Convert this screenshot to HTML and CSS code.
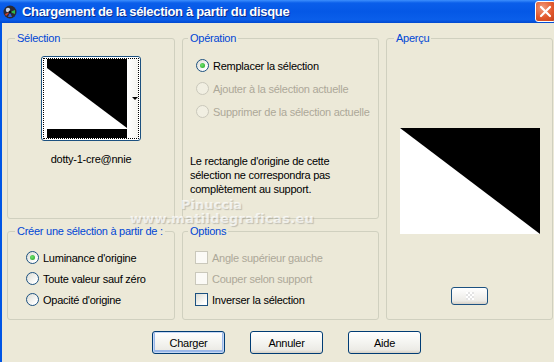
FILE: index.html
```html
<!DOCTYPE html>
<html lang="fr">
<head>
	<meta charset="UTF-8">
	<title>Chargement de la sélection à partir du disque</title>
	<link rel="stylesheet" href="styles.css">
</head>
<body>
	<div class="window">
		<div class="titlebar">
			<svg class="app-icon" width="14" height="14" viewBox="0 0 14 14">
				<circle cx="7" cy="7" r="6.5" fill="#2b2b33"/>
				<circle cx="5" cy="5" r="2.2" fill="#c9d3e6"/>
				<path d="M7 7 L12 5 L12 9 Z" fill="#2fb84a"/>
				<path d="M7 7 L9 12 L5 12 Z" fill="#2a5fe0"/>
				<path d="M7 7 L2 9 L3 11 Z" fill="#d8402a"/>
				<circle cx="7" cy="7" r="1.5" fill="#111"/>
			</svg>
			<span class="title">Chargement de la sélection à partir du disque</span>
			<div class="close">
				<svg width="21" height="21" viewBox="0 0 21 21">
					<path d="M6 6 L15 15 M15 6 L6 15" stroke="#fff" stroke-width="2.2" stroke-linecap="round"/>
				</svg>
			</div>
		</div>

		<div class="body">
			<div class="groups">
				<fieldset class="group g-selection">
					<legend>Sélection</legend>
					<div class="thumb">
						<div class="thumb-focus">
							<svg class="thumb-img" width="80" height="79" viewBox="0 0 80 79">
								<rect width="80" height="79" fill="#000"/>
								<polygon points="0,9 80,69 80,70 0,70" fill="#fff"/>
							</svg>
							<div class="thumb-drop"><span class="arrow"></span></div>
						</div>
					</div>
					<div class="thumb-name">dotty-1-cre@nnie</div>
				</fieldset>

				<fieldset class="group g-operation">
					<legend>Opération</legend>
					<div class="choices">
						<div class="choice"><span class="radio checked"></span>Remplacer la sélection</div>
						<div class="choice disabled"><span class="radio"></span>Ajouter à la sélection actuelle</div>
						<div class="choice disabled"><span class="radio"></span>Supprimer de la sélection actuelle</div>
					</div>
					<p class="note">Le rectangle d'origine de cette<br>sélection ne correspondra pas<br>complètement au support.</p>
				</fieldset>

				<fieldset class="group g-preview">
					<legend>Aperçu</legend>
					<svg class="preview" width="140" height="106" viewBox="0 0 140 106">
						<rect width="140" height="106" fill="#fff"/>
						<polygon points="0,0 140,0 140,106" fill="#000"/>
					</svg>
					<div class="mini-btn"><span class="checker"></span></div>
				</fieldset>

				<fieldset class="group g-source">
					<legend>Créer une sélection à partir de :</legend>
					<div class="choices tight">
						<div class="choice"><span class="radio checked"></span>Luminance d'origine</div>
						<div class="choice"><span class="radio"></span>Toute valeur sauf zéro</div>
						<div class="choice"><span class="radio"></span>Opacité d'origine</div>
					</div>
				</fieldset>

				<fieldset class="group g-options">
					<legend>Options</legend>
					<div class="choices tight">
						<div class="choice disabled"><span class="check"></span>Angle supérieur gauche</div>
						<div class="choice disabled"><span class="check"></span>Couper selon support</div>
						<div class="choice"><span class="check"></span>Inverser la sélection</div>
					</div>
				</fieldset>
			</div>

			<div class="buttons">
				<div class="btn default">Charger</div>
				<div class="btn">Annuler</div>
				<div class="btn">Aide</div>
			</div>
		</div>

		<div class="watermark">
			<div class="wm-name">Pinuccia</div>
			<div class="wm-site">www.matildegraficas.eu</div>
		</div>
	</div>
</body>
</html>
```

FILE: styles.css
```css
*{
	padding: 0;
	margin: 0;
	box-sizing: border-box;
}
html,body{
	width: 100%;
	height: 100%;
	background-color: #ece9d8;
	overflow: hidden;
}
.window{
	width: 554px;
	height: 362px;
	position: relative;
	font-family: "Liberation Sans", Arial, sans-serif;
	font-size: 11px;
	letter-spacing: -0.25px;
	color: #000;
	background-color: #ece9d8;
}

/* title bar */
.titlebar{
	height: 23px;
	display: flex;
	align-items: center;
	padding-left: 3px;
	background: linear-gradient(#3d8ffd 0, #0a5eea 3px, #0558e6 50%, #0a5eea 85%, #0048d0 100%);
	position: relative;
}
.app-icon{
	flex: none;
}
.title{
	margin-left: 5px;
	color: #fff;
	font-weight: bold;
	font-size: 13px;
	letter-spacing: -0.32px;
	text-shadow: 1px 1px 0 #0a2a8a;
}
.close{
	position: absolute;
	top: 1px;
	left: 535px;
	width: 21px;
	height: 21px;
	border: 1px solid #fff;
	border-radius: 3px;
	background: radial-gradient(circle at 35% 30%, #f09a7c, #e2582c 55%, #c2401a);
}
.close svg{
	display: block;
	margin: -1px;
}

/* body */
.body{
	height: 339px;
	border-left: 2px solid #0055e5;
	padding: 9px 0 0 5px;
}
.groups{
	display: grid;
	grid-template-columns: 168px 197px 167px;
	grid-template-rows: 187px 95px;
	column-gap: 7px;
	row-gap: 6px;
}
.group{
	border: 1px solid #d0d0bf;
	border-radius: 3px;
	min-width: 0;
}
.group legend{
	margin-left: 7px;
	padding: 0 2px;
	line-height: 13px;
	color: #0046d5;
}
.g-preview{
	grid-row: 1 / span 2;
	grid-column: 3;
	display: flex;
	flex-direction: column;
	align-items: center;
}
.g-operation legend,
.g-options legend{
	margin-left: 5px;
}

/* selection thumbnail */
.thumb{
	width: 100px;
	height: 85px;
	margin: 11px 0 0 33px;
	border: 1px solid #1c5180;
	border-radius: 3px;
	padding: 1px;
	background-color: #fff;
}
.thumb-focus{
	height: 100%;
	border: 1px dotted #000;
	padding-left: 3px;
	display: flex;
}
.thumb-img{
	display: block;
	flex: none;
}
.thumb-drop{
	width: 11px;
	background: linear-gradient(to right, #fff, #f3f3ef);
	display: flex;
	align-items: center;
	justify-content: flex-end;
}
.arrow{
	width: 0;
	height: 0;
	border-left: 3px solid transparent;
	border-right: 3px solid transparent;
	border-top: 3px solid #000;
}
.thumb-name{
	width: 100px;
	margin: 12px 0 0 33px;
	text-align: center;
	line-height: 13px;
}

/* radio and check rows */
.choices{
	padding: 9px 0 0 13px;
}
.choices.tight{
	padding: 9px 0 0 18px;
}
.g-options .choices.tight{
	padding-left: 12px;
}
.choice{
	height: 23px;
	display: flex;
	align-items: center;
	white-space: nowrap;
}
.tight .choice{
	height: 21px;
}
.choice.disabled{
	color: #aca899;
}
.radio{
	width: 13px;
	height: 13px;
	border-radius: 50%;
	border: 1px solid #1c5180;
	background: linear-gradient(135deg, #dcdcd3, #fff 80%);
	margin-right: 4px;
	display: flex;
	align-items: center;
	justify-content: center;
	flex: none;
}
.radio.checked:after{
	content: "";
	width: 5px;
	height: 5px;
	border-radius: 50%;
	background: radial-gradient(circle at 40% 40%, #6fe36f, #21a121);
}
.disabled .radio{
	border-color: #cac8bb;
	background: #f1efe2;
}
.check{
	width: 13px;
	height: 13px;
	border: 1px solid #1c5180;
	background: linear-gradient(135deg, #dcdcd3, #fff 80%);
	margin-right: 4px;
	flex: none;
}
.disabled .check{
	border-color: #cac8bb;
	background: #fbfaf6;
}
.note{
	margin: 31px 0 0 7px;
	line-height: 14px;
}

/* preview */
.preview{
	display: block;
	margin-top: 83px;
}
.mini-btn{
	width: 37px;
	height: 18px;
	margin-top: 53px;
	border: 1px solid #1c5180;
	border-radius: 3px;
	background: linear-gradient(#fff, #ecebe6 80%, #d6d0c5);
	display: flex;
	align-items: center;
	justify-content: center;
}
.checker{
	width: 8px;
	height: 8px;
	background: conic-gradient(#e4e4e4 25%, #fff 0 50%, #e4e4e4 0 75%, #fff 0);
	background-size: 4px 4px;
}

/* dialog buttons */
.buttons{
	display: flex;
	gap: 25px;
	margin: 11px 0 0 145px;
}
.btn{
	width: 73px;
	height: 23px;
	border: 1px solid #003c74;
	border-radius: 3px;
	background: linear-gradient(#fff, #f4f4f0 50%, #ecebe6 85%, #d6d0c5);
	display: flex;
	align-items: center;
	justify-content: center;
}
.btn.default{
	box-shadow: inset 0 0 0 1px #c6d8f5, inset 0 -1px 0 2px #9ab7e8;
}

/* watermark over the dialog */
.watermark{
	position: absolute;
	left: 130px;
	top: 198px;
	font-family: "DejaVu Sans", sans-serif;
	font-weight: bold;
	letter-spacing: 0;
	color: rgba(255,255,255,0.7);
	text-shadow: 1px 1px 1px rgba(90,90,90,0.3);
	pointer-events: none;
}
.wm-name{
	margin-left: 51px;
	font-size: 13px;
	line-height: 14px;
}
.wm-site{
	font-size: 13px;
	line-height: 14px;
	letter-spacing: 0.3px;
}
```
